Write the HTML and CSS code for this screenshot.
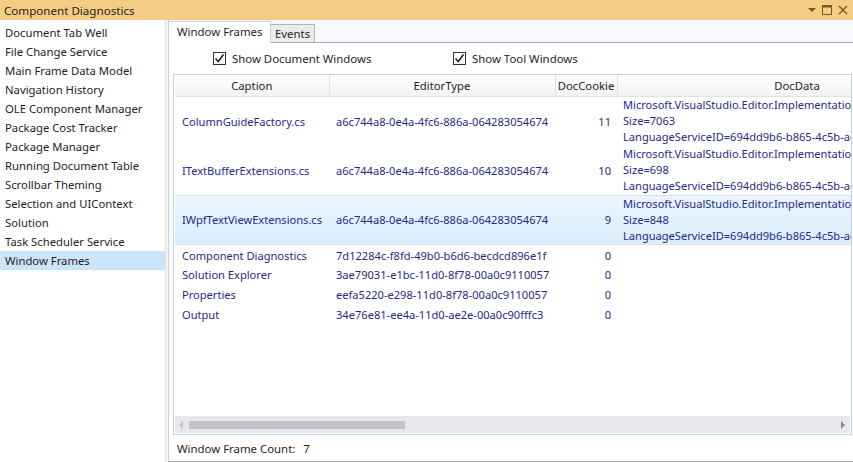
FILE: index.html
```html
<!DOCTYPE html>
<html>
<head>
<meta charset="utf-8">
<link rel="stylesheet" href="styles.css">
</head>
<body>
<div class="app">
  <div class="titlebar">
    <span class="title">Component Diagnostics</span>
    <div class="title-icons">
      <svg width="10" height="10" viewBox="0 0 10 10"><path d="M1 3h8L5 7z" fill="#715d24"/></svg>
      <svg width="12" height="12" viewBox="0 0 12 12"><rect x="1.5" y="1.5" width="9" height="9" fill="none" stroke="#715d24" stroke-width="1"/><rect x="1.5" y="1.5" width="9" height="2" fill="#715d24"/></svg>
      <svg width="12" height="12" viewBox="0 0 12 12"><path d="M2 2l8 8M10 2l-8 8" stroke="#715d24" stroke-width="1.4"/></svg>
    </div>
  </div>
  <div class="main">
    <ul class="sidebar">
      <li>Document Tab Well</li>
      <li>File Change Service</li>
      <li>Main Frame Data Model</li>
      <li>Navigation History</li>
      <li>OLE Component Manager</li>
      <li>Package Cost Tracker</li>
      <li>Package Manager</li>
      <li>Running Document Table</li>
      <li>Scrollbar Theming</li>
      <li>Selection and UIContext</li>
      <li>Solution</li>
      <li>Task Scheduler Service</li>
      <li class="selected">Window Frames</li>
    </ul>
    <div class="splitter"></div>
    <div class="pane">
      <div class="tabstrip">
        <div class="tab active">Window Frames</div>
        <div class="tab">Events</div>
        <div class="tab-fill"></div>
      </div>
      <div class="page">
        <div class="options">
          <label class="check"><span class="box"><svg width="11" height="11" viewBox="0 0 11 11"><path d="M1.5 5.5l2.8 3L9.5 1.5" fill="none" stroke="#1e1e1e" stroke-width="1.6"/></svg></span>Show Document Windows</label>
          <label class="check"><span class="box"><svg width="11" height="11" viewBox="0 0 11 11"><path d="M1.5 5.5l2.8 3L9.5 1.5" fill="none" stroke="#1e1e1e" stroke-width="1.6"/></svg></span>Show Tool Windows</label>
        </div>
        <div class="grid">
          <div class="viewport">
            <table>
              <colgroup><col class="c1"><col class="c2"><col class="c3"><col class="c4"></colgroup>
              <thead>
                <tr><th>Caption</th><th>EditorType</th><th>DocCookie</th><th>DocData</th></tr>
              </thead>
              <tbody>
                <tr class="tall"><td>ColumnGuideFactory.cs</td><td>a6c744a8-0e4a-4fc6-886a-064283054674</td><td class="num">11</td><td class="data">Microsoft.VisualStudio.Editor.Implementation.VsTextBufferAdapter<br>Size=7063<br>LanguageServiceID=694dd9b6-b865-4c5b-ad85-86356e9c88dc</td></tr>
                <tr class="tall"><td>ITextBufferExtensions.cs</td><td>a6c744a8-0e4a-4fc6-886a-064283054674</td><td class="num">10</td><td class="data">Microsoft.VisualStudio.Editor.Implementation.VsTextBufferAdapter<br>Size=698<br>LanguageServiceID=694dd9b6-b865-4c5b-ad85-86356e9c88dc</td></tr>
                <tr class="tall sel"><td>IWpfTextViewExtensions.cs</td><td>a6c744a8-0e4a-4fc6-886a-064283054674</td><td class="num">9</td><td class="data">Microsoft.VisualStudio.Editor.Implementation.VsTextBufferAdapter<br>Size=848<br>LanguageServiceID=694dd9b6-b865-4c5b-ad85-86356e9c88dc</td></tr>
                <tr class="short"><td>Component Diagnostics</td><td>7d12284c-f8fd-49b0-b6d6-becdcd896e1f</td><td class="num">0</td><td></td></tr>
                <tr class="short"><td>Solution Explorer</td><td>3ae79031-e1bc-11d0-8f78-00a0c9110057</td><td class="num">0</td><td></td></tr>
                <tr class="short"><td>Properties</td><td>eefa5220-e298-11d0-8f78-00a0c9110057</td><td class="num">0</td><td></td></tr>
                <tr class="short"><td>Output</td><td>34e76e81-ee4a-11d0-ae2e-00a0c90fffc3</td><td class="num">0</td><td></td></tr>
              </tbody>
            </table>
          </div>
          <div class="hscroll">
            <span class="arrow left"></span>
            <div class="track"><div class="thumb"></div></div>
            <span class="arrow right"></span>
          </div>
        </div>
        <div class="footer"><span>Window Frame Count:</span><span class="count">7</span></div>
      </div>
    </div>
  </div>
</div>
</body>
</html>
```
FILE: styles.css
```css
* { box-sizing: border-box; }
html, body { margin: 0; padding: 0; }
body {
  width: 853px;
  height: 462px;
  overflow: hidden;
  background: #ffffff;
  font-family: "Noto Sans", "Open Sans", sans-serif;
  font-size: 11.3px;
  color: #1e1e1e;
}
.app { display: flex; flex-direction: column; height: 462px; }
.titlebar {
  height: 20px;
  background: #f5cc84;
  display: flex;
  align-items: center;
  justify-content: space-between;
  padding: 0 4px 0 4px;
  flex: none;
}
.title { font-size: 11.6px; color: #1e1e1e; }
.title-icons { display: flex; align-items: center; gap: 4px; }
.main { flex: 1; display: flex; min-height: 0; }
.sidebar {
  list-style: none;
  margin: 0;
  padding: 3px 0 0 0;
  width: 165px;
  flex: none;
}
.sidebar li {
  height: 19px;
  line-height: 19px;
  padding-left: 5px;
  white-space: nowrap;
}
.sidebar li.selected { background: #cce4f7; }
.splitter {
  width: 3px;
  flex: none;
  background: #f3f3f3;
  border-left: 1px solid #e2e2e2;
}
.pane { flex: 1; display: flex; flex-direction: column; min-width: 0; }
.tabstrip {
  height: 23px;
  display: flex;
  align-items: flex-end;
  background: #f7f8fc;
  flex: none;
  border-left: 1px solid #cfcfcf;
}
.tab {
  height: 19px;
  line-height: 17px;
  padding: 0 4px;
  background: #ececec;
  border: 1px solid #b4b4b4;
  border-bottom: 1px solid #acacac;
  border-left: none;
  font-size: 11.4px;
  white-space: nowrap;
  flex: none;
}
.tab.active {
  height: 22px;
  line-height: 20px;
  background: #ffffff;
  border: 1px solid #d2d2d2;
  border-left: none;
  border-bottom: none;
  padding: 0 0 0 8px;
  width: 102px;
}
.tab-fill { flex: 1; border-bottom: 1px solid #acacac; height: 1px; }
.page {
  flex: 1;
  display: flex;
  flex-direction: column;
  border-left: 1px solid #cfcfcf;
  border-bottom: 1px solid #acacac;
  padding: 0 1px 0 4px;
  min-height: 0;
}
.options {
  height: 31px;
  display: flex;
  align-items: center;
  padding-left: 40px;
  flex: none;
}
.check { display: flex; align-items: center; width: 240px; font-size: 11.4px; }
.box {
  width: 13px; height: 13px;
  border: 1px solid #333333;
  background: #fff;
  margin-right: 6px;
  display: flex; align-items: center; justify-content: center;
}
.grid {
  height: 361px;
  border: 1px solid #b9d7ec;
  display: flex;
  flex-direction: column;
  flex: none;
}
.viewport { flex: 1; overflow: hidden; padding-left: 1px; }
table {
  border-collapse: collapse;
  table-layout: fixed;
  width: 802px;
  color: #1f2a87;
  font-size: 11.1px;
}
col.c1 { width: 154px; }
col.c2 { width: 226px; }
col.c3 { width: 62px; }
col.c4 { width: 360px; }
th {
  height: 21px;
  font-weight: normal;
  font-size: 11.3px;
  color: #1e1e1e;
  background: linear-gradient(#ffffff, #f2f2f2);
  border-right: 1px solid #e2e2e2;
  border-bottom: 1px solid #e2e2e2;
  padding: 0;
  white-space: nowrap;
  overflow: hidden;
}
td {
  padding: 0 0 0 7px;
  white-space: nowrap;
  overflow: hidden;
  vertical-align: middle;
}
td.num { text-align: right; padding: 0 6px 0 0; }
td.data { line-height: 16.3px; padding-left: 6px; }
tr.tall { height: 49.5px; }
tr.short { height: 20px; }
tr.sel td {
  background: linear-gradient(#e9f4fd, #dcedfb);
  border-top: 1px solid #cde4f7;
  border-bottom: 1px solid #cde4f7;
}
.hscroll {
  height: 17px;
  background: #e8e8ec;
  display: flex;
  align-items: center;
  margin: 0 1px 1px 1px;
  flex: none;
}
.arrow { width: 0; height: 0; border-top: 4px solid transparent; border-bottom: 4px solid transparent; flex: none; }
.arrow.left { border-right: 4px solid #c2c3c9; margin: 0 6px 0 4px; }
.arrow.right { border-left: 4px solid #868999; margin: 0 5px 0 6px; }
.track { flex: 1; height: 8px; }
.thumb { width: 216px; height: 8px; background: #c2c3c9; }
.footer {
  flex: 1;
  display: flex;
  align-items: center;
  padding-left: 4px;
  font-size: 11.4px;
}
.count { margin-left: 8px; }
```
